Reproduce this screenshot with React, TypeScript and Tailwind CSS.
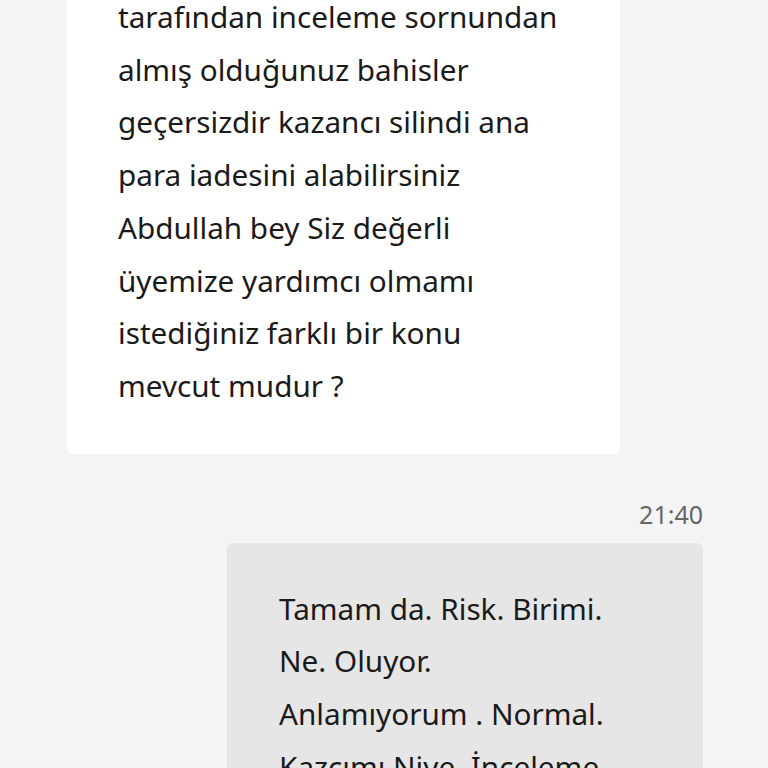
import React from "react";

const incoming = [
  "tarafından inceleme sornundan",
  "almış olduğunuz bahisler",
  "geçersizdir kazancı silindi ana",
  "para iadesini alabilirsiniz",
  "Abdullah bey Siz değerli",
  "üyemize yardımcı olmamı",
  "istediğiniz farklı bir konu",
  "mevcut mudur ?",
];

const outgoing = [
  "Tamam da. Risk. Birimi.",
  "Ne. Oluyor.",
  "Anlamıyorum . Normal.",
  "Kazcımı Niye. İnceleme",
  "Yapılıyor.",
];

export default function App() {
  return (
    <div
      className="w-[768px] h-[768px] overflow-hidden bg-[#f4f4f4] text-[#1a1a1a]"
      style={{ fontFamily: '"Noto Sans", "DejaVu Sans", sans-serif' }}
    >
      {/* incoming message, top is scrolled off */}
      <div className="mx-[67px] w-[553px] -mt-[60px] pt-[51px] pb-[41px] pl-[51px] pr-4 bg-white rounded-md">
        {incoming.map((line, i) => (
          <div key={i} className="whitespace-nowrap text-[29.7px] leading-[52.7px]">
            {line}
          </div>
        ))}
      </div>

      {/* timestamp */}
      <div className="mt-[45px] pr-[65px] text-right text-[25px] leading-[30px] text-[#666666]">
        21:40
      </div>

      {/* outgoing message */}
      <div className="ml-[227px] w-[476px] mt-[14px] pt-[40px] pb-10 pl-[52px] pr-4 bg-[#e6e6e6] rounded-md">
        {outgoing.map((line, i) => (
          <div key={i} className="whitespace-nowrap text-[29.7px] leading-[52.7px]">
            {line}
          </div>
        ))}
      </div>
    </div>
  );
}
